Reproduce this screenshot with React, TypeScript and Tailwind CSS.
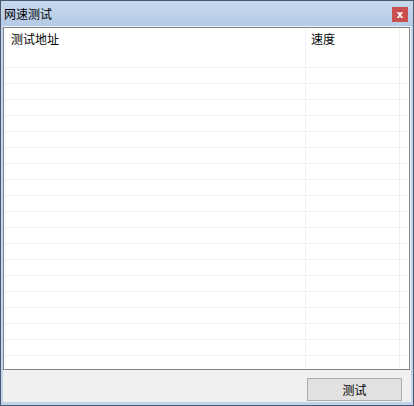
import React from "react";

const font = { fontFamily: '"Noto Sans CJK SC", "Noto Sans", sans-serif' };

export default function App() {
  const rows = Array.from({ length: 20 });
  return (
    <div
      className="w-[414px] h-[406px] bg-[#4b5b6d] p-[1px] overflow-hidden"
      style={font}
    >
      <div className="flex flex-col h-full bg-[#bfd3ea]">
        {/* Title bar */}
        <div className="h-[25px] flex items-center justify-between pl-[3px] pr-[5px] bg-gradient-to-b from-[#c8d9ee] to-[#b4cbe6]">
          <span className="text-[12px] leading-none text-black">网速测试</span>
          <div className="w-[16px] h-[15px] bg-[#c9504e] flex items-center justify-center mt-[2px]">
            <span className="text-white text-[10px] font-bold leading-none" style={{ fontFamily: '"DejaVu Sans", sans-serif' }}>x</span>
          </div>
        </div>
        {/* Client area */}
        <div className="flex-1 mx-[2px] mb-[3px] bg-[#f0f0f0] flex flex-col">
          {/* List view */}
          <div className="mt-[1px] mr-[1px] h-[343px] border border-[#828790] bg-white flex flex-col overflow-hidden">
            <div className="h-[24px] flex shrink-0">
              <div className="w-[302px] border-r border-[#f0f0f0] pl-[7px] pt-[5px] text-[12px] leading-none text-black">
                测试地址
              </div>
              <div className="w-[94px] border-r border-[#f0f0f0] pl-[5px] pt-[5px] text-[12px] leading-none text-black">
                速度
              </div>
              <div className="flex-1" />
            </div>
            {rows.map((_, i) => (
              <div key={i} className="h-[16px] flex shrink-0 border-b border-[#f0f0f0]">
                <div className="w-[302px] border-r border-[#f0f0f0]" />
                <div className="w-[94px] border-r border-[#f0f0f0]" />
                <div className="flex-1" />
              </div>
            ))}
          </div>
          {/* Button row */}
          <div className="flex justify-end pr-[9px] pt-[8px]">
            <button className="w-[95px] h-[23px] bg-[#e1e1e1] border border-[#adadad] text-[12px] leading-none text-black flex items-center justify-center">
              测试
            </button>
          </div>
        </div>
      </div>
    </div>
  );
}
